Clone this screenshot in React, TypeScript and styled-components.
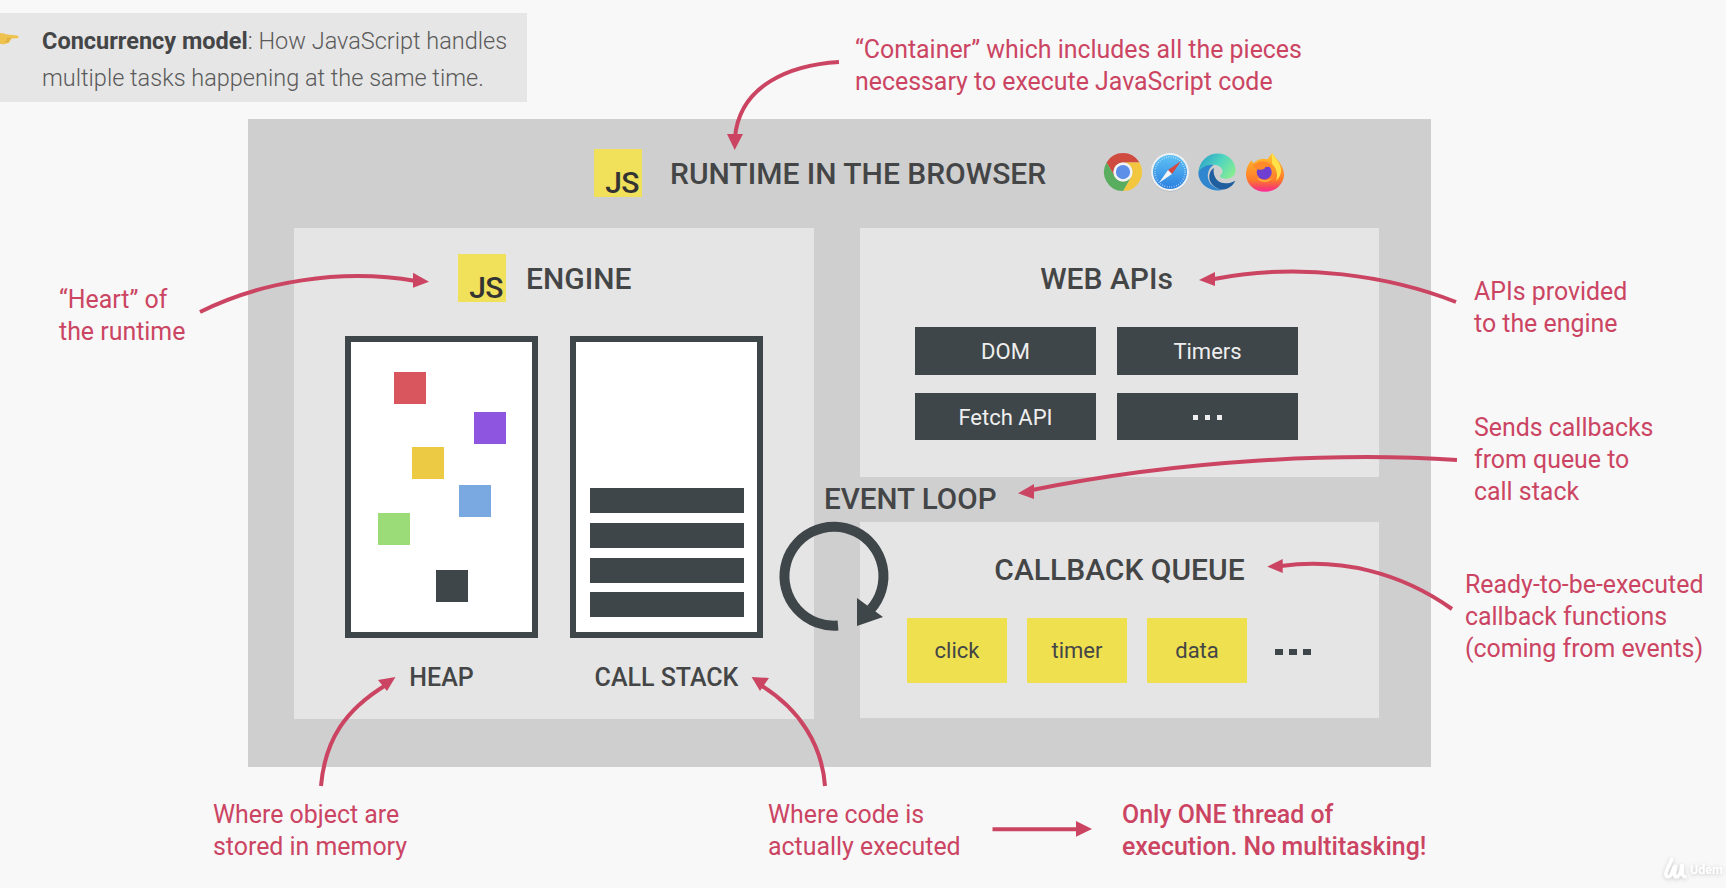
import React from 'react';
import styled, { createGlobalStyle } from 'styled-components';

const INK = '#444546';
const SLATE = '#3f4649';
const PINK = '#cb4563';

const Global = createGlobalStyle`
  html, body { margin: 0; padding: 0; background: #f8f8f8; }
  body { font-family: Roboto, "Liberation Sans", sans-serif; }
`;

const Stage = styled.div`
  position: relative;
  width: 1726px;
  height: 888px;
  overflow: hidden;
  background: #f8f8f8;
  padding-top: 13px;
  box-sizing: border-box;
`;

const Note = styled.div`
  position: relative;
  width: 527px;
  height: 89px;
  box-sizing: border-box;
  padding: 10px 0 0 42px;
  background: #e6e6e6;
  color: #5a5a5a;
  font-size: 23.5px;
  line-height: 37px;
  font-weight: 300;
  white-space: nowrap;
  strong { font-weight: 700; color: ${INK}; }
`;

const Pointer = styled.svg`
  position: absolute;
  left: 0;
  top: 18px;
  width: 20px;
  height: 16px;
`;

const Runtime = styled.section`
  margin: 17px 0 0 248px;
  width: 1183px;
  height: 648px;
  box-sizing: border-box;
  background: #cfcfcf;
  padding-left: 46px;
  display: flex;
  flex-direction: column;
`;

const RuntimeHeader = styled.header`
  height: 109px;
  padding: 30px 0 0 300px;
  box-sizing: border-box;
  display: flex;
  align-items: flex-start;
`;

const Title = styled.h2`
  margin: 0;
  color: ${INK};
  font-size: 30px;
  line-height: 50px;
  font-weight: 500;
  white-space: nowrap;
`;

const RuntimeTitle = styled(Title)`
  margin-left: 28px;
  width: 378px;
`;

const JsLogo = styled.div`
  width: 48px;
  height: 48px;
  flex: none;
  background: #f1e05a;
  color: #333;
  box-sizing: border-box;
  display: flex;
  align-items: flex-end;
  justify-content: flex-end;
  padding: 0 3px 0 0;
  font-size: 30px;
  line-height: 29px;
  font-weight: 500;
  letter-spacing: -0.5px;
`;

const Browsers = styled.div`
  display: flex;
  gap: 9.2px;
  margin-left: 56px;
  padding-top: 4px;
`;

const BrowserIcon = styled.svg`
  width: 38px;
  height: 38px;
  display: block;
  overflow: visible;
`;

const Columns = styled.div`
  display: grid;
  grid-template-columns: 520px 519px;
  column-gap: 46px;
`;

const Engine = styled.section`
  height: 491px;
  background: #e5e5e5;
  box-sizing: border-box;
  padding: 26px 0 0 51px;
  display: flex;
  flex-direction: column;
`;

const EngineHeader = styled.header`
  display: flex;
  gap: 20px;
  padding-left: 113px;
  height: 82px;
`;

const EngineParts = styled.div`
  display: flex;
  gap: 32px;
`;

const Part = styled.div`
  width: 193px;
  display: flex;
  flex-direction: column;
  align-items: center;
`;

const PartBox = styled.div`
  position: relative;
  width: 193px;
  height: 302px;
  box-sizing: border-box;
  border: 6px solid ${SLATE};
  background: #fff;
`;

const StackBox = styled(PartBox)`
  display: flex;
  flex-direction: column;
  justify-content: flex-end;
  align-items: center;
  gap: 9.7px;
  padding-bottom: 14.7px;
`;

const Frame = styled.div`
  width: 154px;
  height: 25px;
  background: ${SLATE};
`;

const Obj = styled.i<{ $x: number; $y: number; $c: string }>`
  position: absolute;
  left: ${p => p.$x}px;
  top: ${p => p.$y}px;
  width: 32px;
  height: 32px;
  background: ${p => p.$c};
`;

const PartLabel = styled.div`
  margin-top: 25px;
  color: ${INK};
  font-size: 25px;
  line-height: 30px;
  font-weight: 500;
  white-space: nowrap;
`;

const RightColumn = styled.div`
  position: relative;
  display: flex;
  flex-direction: column;
  gap: 45px;
`;

const WebApis = styled.section`
  height: 249px;
  background: #e5e5e5;
  box-sizing: border-box;
  padding: 26px 81px 0 55px;
  display: flex;
  flex-direction: column;
  align-items: center;
`;

const ApiGrid = styled.div`
  margin-top: 23px;
  display: grid;
  grid-template-columns: 181px 181px;
  grid-auto-rows: 47.5px;
  gap: 18px 21px;
`;

const ApiChip = styled.div`
  background: ${SLATE};
  color: #eee;
  font-size: 22px;
  box-sizing: border-box;
  padding-top: 1.5px;
  display: flex;
  align-items: center;
  justify-content: center;
  gap: 7px;
`;

const Dot = styled.i<{ $w: number; $h: number; $c: string }>`
  width: ${p => p.$w}px;
  height: ${p => p.$h}px;
  background: ${p => p.$c};
  display: block;
`;

const Queue = styled.section`
  height: 196px;
  background: #e5e5e5;
  box-sizing: border-box;
  padding: 23px 0 0 47px;
  display: flex;
  flex-direction: column;
`;

const QueueTitle = styled(Title)`
  text-align: center;
  width: 425px;
`;

const QueueRow = styled.div`
  margin-top: 22.5px;
  display: flex;
  gap: 20px;
  align-items: center;
`;

const QueueChip = styled.div`
  width: 100px;
  height: 65px;
  background: #eee04f;
  color: ${INK};
  font-size: 22px;
  display: flex;
  align-items: center;
  justify-content: center;
`;

const QueueDots = styled.div`
  display: flex;
  gap: 6px;
  margin-left: 8px;
  padding-top: 3px;
`;

const EventLoop = styled.div`
  position: absolute;
  left: -36px;
  top: 252px;
  color: ${INK};
  font-size: 29.6px;
  line-height: 38px;
  font-weight: 500;
  white-space: nowrap;
`;

const Overlay = styled.svg`
  position: absolute;
  inset: 0;
  width: 1726px;
  height: 888px;
  pointer-events: none;
`;

const Annotation = styled.div<{ $x: number; $y: number; $strong?: boolean }>`
  position: absolute;
  left: ${p => p.$x}px;
  top: ${p => p.$y}px;
  color: ${PINK};
  font-size: 24.9px;
  line-height: 32.2px;
  font-weight: ${p => (p.$strong ? 500 : 400)};
  white-space: nowrap;
`;

const Watermark = styled.div`
  position: absolute;
  left: 1663px;
  top: 857px;
  display: flex;
  align-items: center;
  gap: 2px;
  color: #fff;
  font-size: 12.5px;
  font-weight: 700;
  white-space: nowrap;
  filter: drop-shadow(0 1px 2px rgba(0, 0, 0, 0.18));
`;

const WatermarkMark = styled.svg`
  width: 25px;
  height: 24px;
  display: block;
`;

const CHROME_PIECE = 'M3.2 12A24 24 0 0 1 44.8 12L24 12A12 12 0 0 0 13.6 30Z';

const Chrome = () => (
  <BrowserIcon viewBox="0 0 48 48">
    <path d={CHROME_PIECE} fill="#cf4a3f" />
    <path d={CHROME_PIECE} fill="#f2c63f" transform="rotate(120 24 24)" />
    <path d={CHROME_PIECE} fill="#59ad5f" transform="rotate(240 24 24)" />
    <circle cx="24" cy="24" r="12" fill="#f4f4f4" />
    <circle cx="24" cy="24" r="9" fill="#5d8fe8" />
  </BrowserIcon>
);

const Safari = () => (
  <BrowserIcon viewBox="0 0 48 48">
    <defs>
      <linearGradient id="sf" x1="0" y1="0" x2="0" y2="1">
        <stop offset="0" stopColor="#5fc3f5" />
        <stop offset="1" stopColor="#2b7fe0" />
      </linearGradient>
    </defs>
    <circle cx="24" cy="25" r="24" fill="#b5b9bd" />
    <circle cx="24" cy="24" r="24" fill="#eef1f3" />
    <circle cx="24" cy="24" r="21.5" fill="url(#sf)" />
    <circle cx="24" cy="24" r="19" fill="none" stroke="#d8ecfb" strokeWidth="2" strokeDasharray="0.7 2.3" />
    <polygon points="38,10 21.5,21.5 26.5,26.5" fill="#d9453f" />
    <polygon points="10,38 21.5,21.5 26.5,26.5" fill="#f4f4f4" />
  </BrowserIcon>
);

const Edge = () => (
  <BrowserIcon viewBox="0 0 48 48">
    <defs>
      <linearGradient id="eg" x1="0" y1="0.2" x2="1" y2="0.7">
        <stop offset="0" stopColor="#2c9fc8" />
        <stop offset="0.5" stopColor="#4fd4c0" />
        <stop offset="1" stopColor="#86ec92" />
      </linearGradient>
    </defs>
    <path d="M0.5 24C2 10 12 0.5 25 0.5C38 0.5 47.5 10 47.5 22C47.5 29 41 32.5 35 32.5C30 32.5 27 30.5 28 28.5C31 26 32 23 30 20C27 15 18 13 11 17C6 20 2 23 0.5 24Z" fill="url(#eg)" />
    <path d="M0.5 24C4 18 12 13.5 20 15C14 18 11 26 13 33C15 40 23 46 32 46.5C28 47.8 22 47.8 17 46C7 43 0 34 0.5 24Z" fill="#2f86cf" />
    <path d="M20 19C15 22 13 29 15 35C18 42 26 47 33 46C39 45 44.5 41 47 35C41 38.5 31 40 25.5 35.5C20.5 31 19 25 20 19Z" fill="#1f5f9f" />
  </BrowserIcon>
);

const Firefox = () => (
  <BrowserIcon viewBox="0 0 48 48">
    <defs>
      <linearGradient id="ff" x1="0.5" y1="0" x2="0.5" y2="1">
        <stop offset="0" stopColor="#ffc32e" />
        <stop offset="0.7" stopColor="#ff7a2a" />
        <stop offset="0.9" stopColor="#f5406a" />
        <stop offset="1" stopColor="#ff2aa0" />
      </linearGradient>
    </defs>
    <path d="M33 0C35 4 40 8 43 13C47 19 48 24 48 27C48 39 37 49 24 49C11 49 0 39 0 27C0 20 3 13 7 9C8 12 10 13 11 12C14 8 21 6 27 8C29 5 31 3 33 0Z" fill="url(#ff)" />
    <path d="M33 0C35 5 42 10 44 19C45 25 43 31 38 35C41 27 38 18 33 14C33 9 32 4 33 0Z" fill="#ffe14a" />
    <circle cx="23" cy="24" r="9.5" fill="#6f3fd2" />
    <path d="M9 16C13 11 22 9 28 12C32 14 34 17 35 20C31 17 27 17 24 18C25 20 20 21 18 21C15 21 11 20 9 16Z" fill="#ff8a2a" />
    <path d="M13 31C17 38 30 39 35 30C31 35 22 36 13 31Z" fill="#ffb03a" />
  </BrowserIcon>
);

const Head = ({ points }: { points: string }) => <polygon points={points} fill={PINK} />;
const Curve = ({ d }: { d: string }) => <path d={d} fill="none" stroke={PINK} strokeWidth={4} />;

const objects: { x: number; y: number; c: string }[] = [
  { x: 43, y: 30, c: '#d9565f' },
  { x: 122.5, y: 70, c: '#8e55e0' },
  { x: 61, y: 105, c: '#edca43' },
  { x: 108, y: 143, c: '#7aa9e2' },
  { x: 27, y: 171, c: '#9bdc79' },
  { x: 85, y: 228, c: SLATE },
];

export default function App() {
  return (
    <Stage>
      <Global />
      <Note>
        <Pointer viewBox="0 0 20 16">
          <path d="M-6 3C0 1 4 2 7 3.5L17 4.5C19 4.8 19 7 17 7.2L11 7.6C11.5 9 10.5 10 9.5 10C10 11.5 8.5 12.5 7 12.2C5 13.5 0 13.5 -6 12Z" fill="#efc24d" />
          <path d="M7 8L10.5 7.6M5.5 10.5L9 10" stroke="#c8962e" strokeWidth="0.8" />
        </Pointer>
        <strong>Concurrency model</strong>: How JavaScript handles
        <br />
        multiple tasks happening at the same time.
      </Note>

      <Runtime>
        <RuntimeHeader>
          <JsLogo>JS</JsLogo>
          <RuntimeTitle>RUNTIME IN THE BROWSER</RuntimeTitle>
          <Browsers>
            <Chrome />
            <Safari />
            <Edge />
            <Firefox />
          </Browsers>
        </RuntimeHeader>

        <Columns>
          <Engine>
            <EngineHeader>
              <JsLogo>JS</JsLogo>
              <Title>ENGINE</Title>
            </EngineHeader>
            <EngineParts>
              <Part>
                <PartBox>
                  {objects.map(o => (
                    <Obj key={o.c} $x={o.x} $y={o.y} $c={o.c} />
                  ))}
                </PartBox>
                <PartLabel>HEAP</PartLabel>
              </Part>
              <Part>
                <StackBox>
                  <Frame />
                  <Frame />
                  <Frame />
                  <Frame />
                </StackBox>
                <PartLabel>CALL STACK</PartLabel>
              </Part>
            </EngineParts>
          </Engine>

          <RightColumn>
            <WebApis>
              <Title>WEB APIs</Title>
              <ApiGrid>
                <ApiChip>DOM</ApiChip>
                <ApiChip>Timers</ApiChip>
                <ApiChip>Fetch API</ApiChip>
                <ApiChip>
                  <Dot $w={5} $h={5} $c="#eee" />
                  <Dot $w={5} $h={5} $c="#eee" />
                  <Dot $w={5} $h={5} $c="#eee" />
                </ApiChip>
              </ApiGrid>
            </WebApis>
            <Queue>
              <QueueTitle>CALLBACK QUEUE</QueueTitle>
              <QueueRow>
                <QueueChip>click</QueueChip>
                <QueueChip>timer</QueueChip>
                <QueueChip>data</QueueChip>
                <QueueDots>
                  <Dot $w={8} $h={6} $c={SLATE} />
                  <Dot $w={8} $h={6} $c={SLATE} />
                  <Dot $w={8} $h={6} $c={SLATE} />
                </QueueDots>
              </QueueRow>
            </Queue>
            <EventLoop>EVENT LOOP</EventLoop>
          </RightColumn>
        </Columns>
      </Runtime>

      <Overlay viewBox="0 0 1726 888">
        <path d="M838 625.5A49.5 49.5 0 1 1 871 609" fill="none" stroke={SLATE} strokeWidth={10} />
        <polygon points="857,598 883,617 857,626" fill={SLATE} />

        <Curve d="M839 62C790 65 740 85 735 137" />
        <Head points="734.7,150 727,134 743,134" />

        <Curve d="M200 312C260 282 340 268 416 281" />
        <Head points="429,281.7 413,272.7 413,287.7" />

        <Curve d="M1456 302C1390 276 1300 262 1214 279" />
        <Head points="1199,280 1215,272 1215,286" />

        <Curve d="M1457 460C1340 452 1180 460 1032 490" />
        <Head points="1018,493.3 1034,484 1034,499" />

        <Curve d="M1452 609C1400 572 1340 558 1281 566" />
        <Head points="1267.3,566.7 1282.7,559 1282.7,573" />

        <Curve d="M321 786C325 740 345 710 386 685" />
        <Head points="395.5,677 378,680 387,691" />

        <Curve d="M825 786C822 745 800 710 762 686" />
        <Head points="751.6,677 769,678 760,691" />

        <Curve d="M992.5 829.3H1078" />
        <Head points="1092,829 1076,821 1076,836.7" />
      </Overlay>

      <Annotation $x={855} $y={34}>
        “Container” which includes all the pieces
        <br />
        necessary to execute JavaScript code
      </Annotation>
      <Annotation $x={59} $y={284}>
        “Heart” of
        <br />
        the runtime
      </Annotation>
      <Annotation $x={1474} $y={276}>
        APIs provided
        <br />
        to the engine
      </Annotation>
      <Annotation $x={1474} $y={411.5}>
        Sends callbacks
        <br />
        from queue to
        <br />
        call stack
      </Annotation>
      <Annotation $x={1465} $y={569}>
        Ready-to-be-executed
        <br />
        callback functions
        <br />
        (coming from events)
      </Annotation>
      <Annotation $x={213} $y={799}>
        Where object are
        <br />
        stored in memory
      </Annotation>
      <Annotation $x={768} $y={799}>
        Where code is
        <br />
        actually executed
      </Annotation>
      <Annotation $x={1122} $y={799} $strong>
        Only ONE thread of
        <br />
        execution. No multitasking!
      </Annotation>

      <Watermark>
        <WatermarkMark viewBox="0 0 26 24">
          <path d="M9 2C7 8 3 13 3 17C3 21 7 21 9 17C10 14 11 9 12.5 9C14 9 12 15 12 18C12 21 15 21 17 18C19 15 19 10 20 7C20 13 19 20 23 20" fill="none" stroke="#fff" strokeWidth="3.6" strokeLinecap="round" />
        </WatermarkMark>
        Udem
      </Watermark>
    </Stage>
  );
}
